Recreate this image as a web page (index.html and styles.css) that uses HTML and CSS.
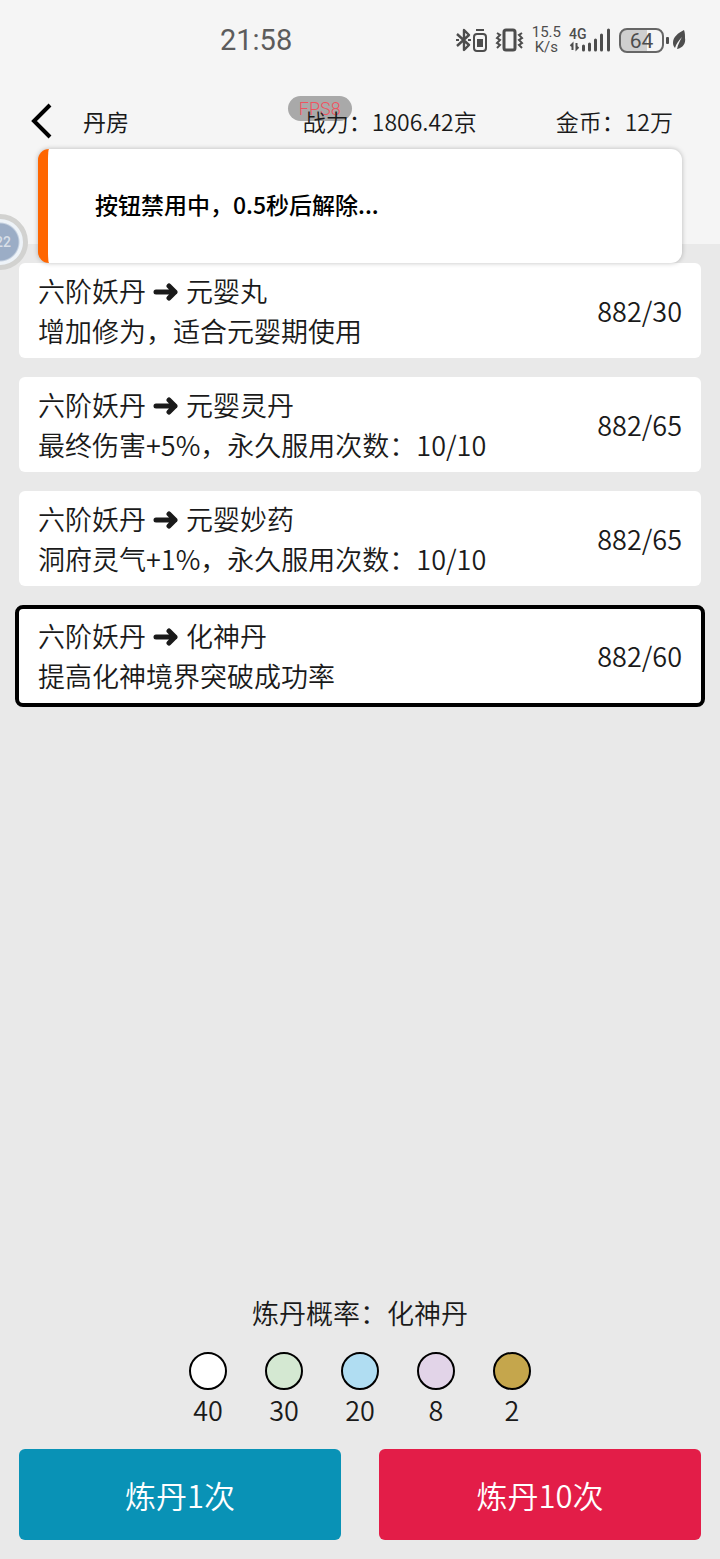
FILE: index.html
```html
<!DOCTYPE html>
<html lang="zh-CN">
<head>
  <meta charset="UTF-8">
  <title>丹房</title>
  <meta name="viewport" content="width=device-width, initial-scale=1.0">
  <link rel="stylesheet" href="styles.css">
</head>
<body>
  <header class="header">
    <div class="status-bar">
      <span class="clock">21:58</span>
      <div class="status-icons">
        <svg class="icon-bt" width="32" height="26" viewBox="0 0 32 26" fill="none" stroke="#4d4d4d" stroke-width="2">
          <path d="M2 7l12 11-5 5V3l5 5L2 19" stroke-width="2.400" stroke-linejoin="round"/>
          <path d="M1 13h3M13 13h3"/>
          <rect x="19" y="7" width="12" height="17" rx="3"/>
          <path d="M21 3h8"/>
          <rect x="22" y="12" width="6" height="8" fill="#4d4d4d" stroke="none"/>
        </svg>
        <svg class="icon-vibrate" width="29" height="26" viewBox="0 0 29 26" fill="none" stroke="#4d4d4d">
          <rect x="9" y="3" width="11" height="20" rx="2" stroke-width="3"/>
          <path d="M2 6l3 2-3 3 3 2-3 3 3 2-3 3M27 6l-3 2 3 3-3 2 3 3-3 2 3 3" stroke-width="2"/>
        </svg>
        <div class="net-speed"><span>15.5</span><span>K/s</span></div>
        <div class="signal">
          <span class="signal-type">4G</span>
          <svg width="42" height="26" viewBox="0 0 42 26" fill="none" stroke="#4d4d4d">
            <path d="M3.500 23v-6l-2 2M7.500 16v6l2-2" stroke-width="2"/>
            <path d="M14.500 23v-4M20.500 23v-6M26.500 23v-10M32.500 23V8M39.500 23V3" stroke-width="3" stroke-linecap="round"/>
          </svg>
        </div>
        <div class="battery"><span>64</span></div>
        <svg class="icon-leaf" width="15" height="22" viewBox="0 0 15 22">
          <path d="M12 1C6 4 1 8 1 14c0 2 1 4 2 5 1-4 4-8 7-11-2 4-4 7-5 12 6-1 9-6 8-11 0-3 0-5-1-8z" fill="#4d4d4d"/>
        </svg>
      </div>
    </div>
    <div class="nav">
      <button class="back" aria-label="返回">
        <svg width="21" height="36" viewBox="0 0 21 36" fill="none" stroke="#000" stroke-width="4">
          <path d="M19 2L3 18l16 16"/>
        </svg>
      </button>
      <h1 class="title">丹房</h1>
      <div class="stats">
        <span class="power"><span class="fps">FPS8</span>战力：1806.42京</span>
        <span>金币：12万</span>
      </div>
    </div>
    <div class="toast" role="status">按钮禁用中，0.5秒后解除...</div>
    <div class="float-ball">22</div>
  </header>

  <main class="recipes">
    <button class="recipe">
      <span class="info">
        <span class="name">六阶妖丹<svg class="arrow" width="26" height="20" viewBox="0 0 26 20"><path d="M3 11h19M16 5l6 6-6 6"/></svg>元婴丸</span>
        <span>增加修为，适合元婴期使用</span>
      </span>
      <span class="count">882/30</span>
    </button>
    <button class="recipe">
      <span class="info">
        <span class="name">六阶妖丹<svg class="arrow" width="26" height="20" viewBox="0 0 26 20"><path d="M3 11h19M16 5l6 6-6 6"/></svg>元婴灵丹</span>
        <span>最终伤害+5%，永久服用次数：10/10</span>
      </span>
      <span class="count">882/65</span>
    </button>
    <button class="recipe">
      <span class="info">
        <span class="name">六阶妖丹<svg class="arrow" width="26" height="20" viewBox="0 0 26 20"><path d="M3 11h19M16 5l6 6-6 6"/></svg>元婴妙药</span>
        <span>洞府灵气+1%，永久服用次数：10/10</span>
      </span>
      <span class="count">882/65</span>
    </button>
    <button class="recipe selected">
      <span class="info">
        <span class="name">六阶妖丹<svg class="arrow" width="26" height="20" viewBox="0 0 26 20"><path d="M3 11h19M16 5l6 6-6 6"/></svg>化神丹</span>
        <span>提高化神境界突破成功率</span>
      </span>
      <span class="count">882/60</span>
    </button>
  </main>

  <footer class="footer">
    <div class="rate-title">炼丹概率：化神丹</div>
    <ul class="rates">
      <li><i class="dot white"></i>40</li>
      <li><i class="dot green"></i>30</li>
      <li><i class="dot blue"></i>20</li>
      <li><i class="dot purple"></i>8</li>
      <li><i class="dot gold"></i>2</li>
    </ul>
    <div class="actions">
      <button class="btn once">炼丹1次</button>
      <button class="btn ten">炼丹10次</button>
    </div>
  </footer>
</body>
</html>
```

FILE: styles.css
```css
* {
  box-sizing: border-box;
}

body {
  display: flex;
  flex-direction: column;
  min-height: 100vh;
  margin: 0;
  background: #e9e9e9;
  color: #1a1a1a;
  font-family: "Noto Sans CJK SC", sans-serif;
  font-weight: 350;
  font-size: 27px;
  line-height: 40px;
}

button {
  border: none;
  font: inherit;
  color: inherit;
  cursor: pointer;
}

svg {
  display: block;
  flex: none;
}

.header {
  position: relative;
  height: 244px;
  background: #f5f5f5;
}

/* status bar */
.status-bar {
  display: flex;
  align-items: center;
  justify-content: space-between;
  height: 80px;
  padding: 0 33px 0 220px;
  color: #4d4d4d;
}

.clock {
  font-family: Roboto, sans-serif;
  font-size: 29px;
  font-weight: 400;
  color: #5c5c5c;
}

.status-icons {
  display: flex;
  align-items: center;
  gap: 8px;
  font-family: Roboto, sans-serif;
  font-weight: 400;
}

.net-speed {
  display: flex;
  flex-direction: column;
  align-items: center;
  font-size: 15px;
  line-height: 15px;
}

.signal {
  position: relative;
}

.signal-type {
  position: absolute;
  top: 0;
  left: 0;
  font-size: 14px;
  font-weight: 500;
  line-height: 14px;
}

.battery {
  position: relative;
  width: 45px;
  height: 25px;
  border: 2px solid #666;
  border-radius: 8px;
  background: linear-gradient(to right, #cfcfcf 64%, #f5f5f5 64%);
  font-size: 21px;
  line-height: 22px;
  text-align: center;
}

.battery::after {
  content: "";
  position: absolute;
  top: 7px;
  right: -7px;
  width: 3px;
  height: 7px;
  border-radius: 1px;
  background: #4d4d4d;
}

/* nav */
.nav {
  display: flex;
  align-items: center;
  height: 82px;
  padding: 0 47px 0 31px;
  font-size: 23px;
}

.back {
  padding: 0;
  background: none;
}

.title {
  margin: 0 0 0 31px;
  font-size: 23px;
  font-weight: 400;
}

.stats {
  display: flex;
  gap: 79px;
  margin-left: auto;
}

.power {
  position: relative;
  z-index: 0;
}

.fps {
  position: absolute;
  z-index: -1;
  top: -5px;
  left: -15px;
  width: 64px;
  height: 25px;
  border-radius: 13px;
  background: #a9a9a9;
  color: #f0525f;
  font-family: Roboto, sans-serif;
  font-size: 18px;
  line-height: 26px;
  text-align: center;
}

.toast {
  position: absolute;
  z-index: 1;
  top: 149px;
  left: 38px;
  right: 38px;
  height: 114px;
  padding-left: 47px;
  border-left: 10px solid #ff6600;
  border-radius: 11px;
  background: #fff;
  box-shadow: 0 0 5px rgba(0, 0, 0, 0.25);
  color: #000;
  font-size: 23px;
  font-weight: 500;
  line-height: 110px;
}

.float-ball {
  position: absolute;
  top: 214px;
  left: -28px;
  width: 56px;
  height: 56px;
  padding-left: 18px;
  border: 5px solid #d2d2d0;
  border-radius: 50%;
  background: radial-gradient(circle, #9badc6 18px, #eef3f8 20px);
  color: #d8dfe8;
  font-family: Roboto, sans-serif;
  font-size: 14px;
  font-weight: 500;
  line-height: 46px;
}

/* recipe list */
.recipes {
  display: flex;
  flex: 1;
  flex-direction: column;
  gap: 19px;
  padding: 19px;
}

.recipe {
  display: flex;
  align-items: center;
  justify-content: space-between;
  padding: 8px 19px 7px;
  border-radius: 6px;
  background: #fff;
  text-align: left;
}

.recipe.selected {
  margin: 0 -4px;
  padding: 7px 19px;
  border: 4px solid #000;
  border-radius: 8px;
}

.info {
  display: flex;
  flex-direction: column;
}

.name {
  display: flex;
  align-items: center;
  gap: 7px;
}

.arrow {
  fill: none;
  stroke: #1a1a1a;
  stroke-width: 5;
  stroke-linecap: round;
  stroke-linejoin: round;
}

/* footer */
.footer {
  padding: 0 19px 19px;
}

.rate-title {
  text-align: center;
}

.rates {
  display: flex;
  justify-content: center;
  gap: 38px;
  margin: 19px 0;
  padding: 0;
  list-style: none;
}

.rates li {
  display: flex;
  flex-direction: column;
  align-items: center;
  width: 38px;
}

.dot {
  width: 38px;
  height: 38px;
  border: 2px solid #000;
  border-radius: 50%;
}

.white {
  background: #fff;
}

.green {
  background: #d4e8d2;
}

.blue {
  background: #b0ddf2;
}

.purple {
  background: #e2d4e8;
}

.gold {
  background: #c5a64c;
}

.actions {
  display: grid;
  grid-template-columns: 1fr 1fr;
  gap: 38px;
}

.btn {
  height: 91px;
  border-radius: 6px;
  color: #fff;
  font-size: 31px;
}

.once {
  background: #0992b6;
}

.ten {
  background: #e31d48;
}
```
